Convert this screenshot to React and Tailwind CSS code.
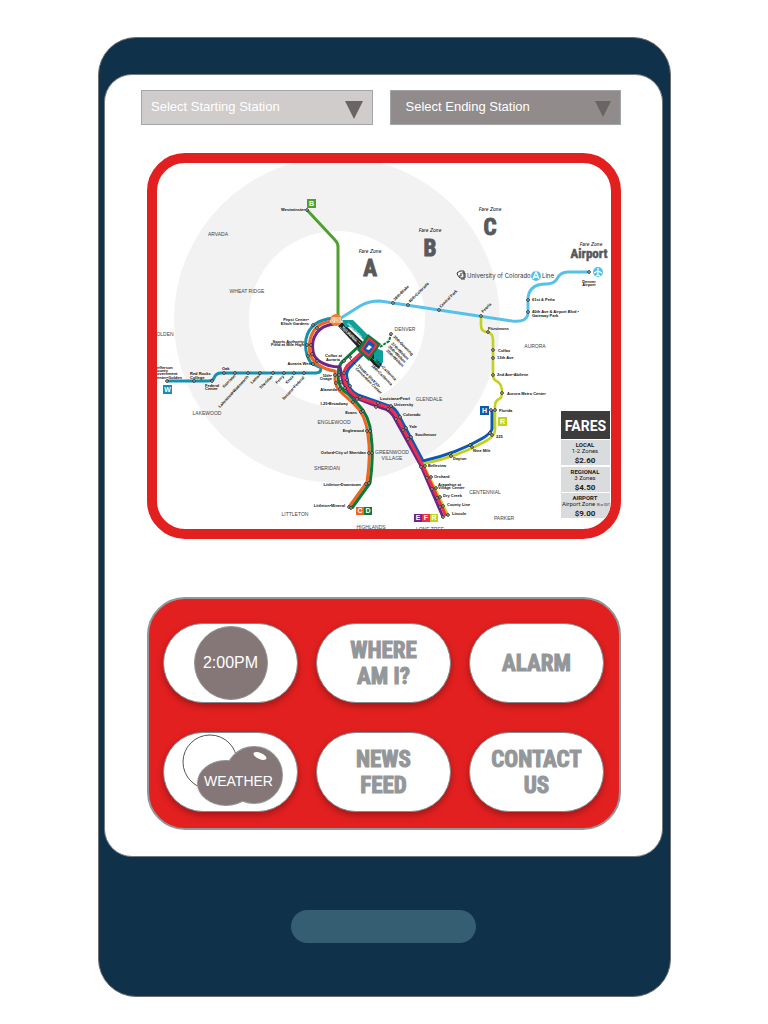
import React from "react";

const stops = [
  [307, 210], [393, 303], [408, 305], [439, 310], [481, 316], [528, 312], [528, 300], [589, 272],
  [488, 332], [493, 350], [493, 358], [493, 375], [502, 393], [495, 410], [491, 410], [490, 433], [492, 435],
  [470, 445], [472, 447], [450, 454], [451, 456],
  [167, 381], [194, 381], [212, 381], [224, 373], [235, 373], [248, 373], [260, 373], [273, 373], [284, 373], [294, 373], [304, 373],
  [313, 325], [317, 328], [307, 345], [311, 345], [308, 356], [312, 354], [313, 364], [317, 361],
  [391, 334], [344, 361], [350, 357], [335, 375], [339, 375], [344, 373], [336, 383], [341, 382], [347, 380],
  [340, 389], [345, 388], [350, 386], [353, 402], [357, 399], [360, 397], [376, 407], [378, 403], [388, 409], [391, 406],
  [396, 419], [400, 417], [403, 430], [406, 428], [408, 439], [411, 437],
  [361, 412], [363, 411], [367, 431], [370, 431], [369, 453], [372, 453], [366, 484], [369, 483], [349, 507], [351, 508],
  [421, 467], [425, 466], [427, 478], [431, 477], [432, 489], [436, 488], [437, 498], [440, 497],
  [440, 507], [443, 506], [443, 517], [448, 515],
];

const stations = [
  [305, 211, "Westminster", "end"],
  [532, 301, "61st & Peña"], [532, 313, "40th Ave & Airport Blvd •"], [532, 317, "Gateway Park"],
  [589, 283, "Denver", "middle"], [589, 286, "Airport", "middle"],
  [488, 330, "Fitzsimons"], [498, 352, "Colfax"], [497, 359, "13th Ave"], [497, 376, "2nd Ave•Abilene"],
  [507, 395, "Aurora Metro Center"], [499, 412, "Florida"], [496, 438, "225"], [473, 452, "Nine Mile"], [453, 460, "Dayton"],
  [157, 369, "efferson"], [157, 372, "ounty"], [157, 375, "overnment"], [157, 379, "enter•Golden"],
  [190, 375, "Red Rocks"], [190, 379, "College"], [205, 387, "Federal"], [205, 390, "Center", "start"], [222, 370, "Oak"],
  [309, 321, "Pepsi Center•", "end"], [309, 325, "Elitch Gardens", "end"],
  [304, 343, "Sports Authority", "end"], [304, 346, "Field at Mile High", "end"],
  [312, 365, "Auraria West", "end"], [342, 357, "Colfax at", "end"], [340, 361, "Auraria", "end"],
  [332, 377, "10th•", "end"], [332, 380, "Osage", "end"], [337, 391, "Alameda", "end"],
  [348, 405, "I-25•Broadway", "end"], [357, 414, "Evans", "end"], [364, 432, "Englewood", "end"],
  [366, 454, "Oxford•City of Sheridan", "end"], [361, 486, "Littleton•Downtown", "end"], [345, 507, "Littleton•Mineral", "end"],
  [380, 400, "Louisiana•Pearl"], [394, 406, "University"], [403, 416, "Colorado"], [409, 428, "Yale"], [415, 436, "Southmoor"],
  [428, 467, "Belleview"], [434, 478, "Orchard"], [438, 486, "Arapahoe at"], [438, 489, "Village Center"],
  [443, 497, "Dry Creek"], [447, 506, "County Line"], [452, 515, "Lincoln"],
];

const slanted = [
  [395, 301, -45, "38th•Blake"], [410, 303, -45, "40th•Colorado"], [441, 308, -45, "Central Park"], [483, 313, -45, "Peoria"],
  [224, 388, -45, "Garrison"], [220, 408, -47, "Lakewood•Wadsworth"], [252, 384, -45, "Lamar"], [261, 389, -45, "Sheridan"],
  [277, 384, -45, "Perry"], [287, 384, -45, "Knox"], [284, 400, -47, "Decatur•Federal"],
  [393, 337, 45, "30th•Downing"], [391, 344, 45, "27th•Welton"], [388, 347, 45, "25th•Welton"], [386, 351, 45, "20th•Welton"],
  [375, 361, 45, "16th•California"], [371, 366, 45, "18th•California"],
  [357, 366, 45, "Theatre District•"], [355, 369, 45, "Convention Center"],
];

const cities = [
  [218, 236, "ARVADA"], [247, 293, "WHEAT RIDGE"], [165, 336, "OLDEN"], [207, 415, "LAKEWOOD"], [405, 331, "DENVER"],
  [535, 348, "AURORA"], [429, 401, "GLENDALE"], [334, 424, "ENGLEWOOD"], [327, 470, "SHERIDAN"], [392, 454, "GREENWOOD"],
  [392, 460, "VILLAGE"], [485, 494, "CENTENNIAL"], [504, 520, "PARKER"], [295, 516, "LITTLETON"], [371, 529, "HIGHLANDS"], [430, 531, "LONE TREE"],
];

const zones = [[370, 253, 276, "A"], [430, 232, 256, "B"], [490, 211, 235, "C"]];

const badges = [
  [307, 199, 9, "#4fa02e", "B"], [163, 385, 9, "#1590ad", "W"], [480, 406, 9, "#1259a8", "H"], [498, 417, 9, "#c1d21d", "R"],
  [356, 507, 8, "#f0641e", "C"], [364, 507, 8, "#0c7a3a", "D"],
  [414, 514, 8, "#6f2586", "E"], [422, 514, 8, "#ee2f48", "F"], [430, 514, 8, "#c1d21d", "R"],
];

const fares = [
  [440, "LOCAL", "1-2 Zones", "$2.60"],
  [467, "REGIONAL", "3 Zones", "$4.50"],
  [493, "AIRPORT", "Airport Zone", "$9.00"],
];

function Line({ d, color, w = 2 }) {
  return <path d={d} fill="none" stroke={color} strokeWidth={w} strokeLinejoin="round" />;
}

function TransitMap() {
  return (
    <svg viewBox="157 163 454 366" className="block w-full font-['Liberation_Sans',sans-serif]" role="img" aria-label="Rail map">
      <circle cx="337" cy="320" r="163" fill="#f2f2f2" />
      <circle cx="337" cy="319" r="88" fill="#fff" />

      <g fill="#444" className="text-[5px]" textAnchor="middle">
        {cities.map(([x, y, t]) => <text key={t} x={x} y={y}>{t}</text>)}
      </g>

      <Line d="M307 210 L335 240 Q338 243 338 247 V318" color="#4fa02e" w={3} />
      <Line d="M341 318 L360 306 Q368 301 380 301 L439 310 L512 321 Q528 323 528 312 V300 Q528 284 546 284 Q554 284 557 279 Q560 272 568 272 H589" color="#55c1e8" w={3} />
      <Line d="M481 316 V325 Q481 332 487 332 Q493 333 493 340 V375 Q493 380 498 382 Q502 385 502 392 Q502 398 499 399 Q495 401 495 406 V430 Q495 436 486 441 Q460 456 423 464 L448 515" color="#c1d21d" w={2.6} />
      <Line d="M492 410 V429 Q491 433 483 438 Q458 453 423 461 L397 412 Q393 406 386 405 L358 395 Q348 390 347 378 Q345 371 352 365 L367 350" color="#0e58b5" w={3} />
      <Line d="M167 381 H208 Q213 381 214 378 Q216 373 221 373 H316 Q321 373 321 368 L311 363 Q304 353 306 339 Q310 320 334 318" color="#1590ad" w={3} />
      <Line d="M334 321 Q314 322 310 340 Q307 355 316 363 Q325 370 335 371 V379 Q335 388 344 395 L354 404 Q366 415 368 435 Q371 455 367 482 L349 507" color="#f0641e" w={3} />
      <Line d="M359 346 L343 361 Q338 365 338 376 Q338 388 348 394 L357 403 Q370 416 371 435 Q374 455 370 483 L352 508" color="#0c7a3a" w={3} />
      <Line d="M334 324 Q317 326 313 341 Q311 356 319 361 Q328 367 340 367 Q341 371 342 378 Q344 390 356 398 L382 408 Q391 410 395 419 L421 466 L443 517" color="#6f2586" w={3} />
      <Line d="M365 349 L349 364 Q343 369 344 378 Q346 390 357 397 L384 406 Q392 408 397 417 L422 464 L446 516" color="#ee2f48" w={3} />

      <path d="M338 326 L342 322 L383 361 L379 369 L374 365 Z" fill="#222" />
      <path d="M340 327 L360 345 M343 326 L363 345 M370 356 L380 366" stroke="#ddd" strokeDasharray="1 1" fill="none" />
      <path d="M342 320 H353 L370 337 L365 341 L350 327 H345 Z" fill="#10a09c" />
      <path d="M374 347 L383 351 V362 L379 366 L374 361 Z" fill="#10a09c" />
      <path d="M380 347 L389 341 L391 334" stroke="#0c7a3a" strokeWidth="2" strokeDasharray="3 1" fill="none" />
      <path d="M357 350 L368 334 L381 344 L369 361 Z" fill="#0c7a3a" />
      <path d="M360 350 L369 337 L378 345 L369 357 Z" fill="#ee2f48" />
      <path d="M363 349 L369 340 L375 345 L369 354 Z" fill="#0e58b5" />
      <path d="M366 349 L369 345 L372 347 L369 350 Z" fill="#fff" />
      <path d="M350 359 L357 366" stroke="#222" strokeWidth="1" strokeDasharray="1 1" />
      <g fill="#fff" className="text-[3px] font-bold">
        <text transform="translate(347 324) rotate(45)">Union Station</text>
        <text transform="translate(342 328) rotate(45)">Free MallRide</text>
      </g>

      <g fill="#fff" stroke="#222" strokeWidth="1">
        {stops.map(([x, y], i) => <circle key={i} cx={x} cy={y} r="1.3" />)}
      </g>

      <circle cx="336" cy="320" r="6" fill="#ee7d2e" />
      <g fill="#fff" className="text-[3px] font-bold" textAnchor="middle">
        <text x="336" y="320">UNION</text>
        <text x="336" y="323">STATION</text>
      </g>

      <g fill="#111" className="text-[4px] font-bold">
        {stations.map(([x, y, t, a]) => <text key={t} x={x} y={y} textAnchor={a || "start"}>{t}</text>)}
        {slanted.map(([x, y, r, t]) => <text key={t} transform={`translate(${x} ${y}) rotate(${r})`}>{t}</text>)}
      </g>

      {badges.map(([x, y, s, c, t]) => (
        <g key={x}>
          <rect x={x} y={y} width={s} height={s} fill={c} />
          <text x={x + s / 2} y={y + s / 2 + 2} fill="#fff" textAnchor="middle" className="text-[7px] font-bold">{t}</text>
        </g>
      ))}

      <g fill="#58595b" textAnchor="middle" className="font-['Liberation_Sans_Narrow','Roboto_Condensed','Liberation_Sans',sans-serif]">
        {zones.map(([x, y, by, t]) => (
          <g key={t}>
            <text x={x} y={y} fill="#222" className="text-[6px] italic">Fare Zone</text>
            <text x={x} y={by} stroke="#58595b" strokeWidth="1" className="text-[23px] font-bold">{t}</text>
          </g>
        ))}
        <text x="591" y="246" fill="#222" className="text-[6px] italic">Fare Zone</text>
        <text x="589" y="258" className="text-[13px] font-bold" stroke="#58595b" strokeWidth="0.5">Airport</text>
      </g>

      <g fill="none" stroke="#333" strokeWidth="1">
        <path d="M460 271 H464 V278 H460 Q457 275 457 273 Z M461 273 V276 H459" />
        <path d="M462 273 H465 V278 M461 279 H465" />
      </g>
      <g fill="#333" className="font-['Inter','Liberation_Sans',sans-serif] text-[6px]">
        <text x="467" y="278">University of Colorado</text>
        <text x="542" y="278">Line</text>
      </g>
      <circle cx="536" cy="276" r="5" fill="#55c1e8" />
      <path d="M533 279 L536 272 L539 279 M534 277 H538" fill="none" stroke="#fff" strokeWidth="1.3" />
      <circle cx="598" cy="272" r="5" fill="#55c1e8" />
      <path d="M598 268 V276 M594 273 L598 271 L602 273 M596 276 L598 275 L600 276" fill="none" stroke="#fff" strokeWidth="1.2" />

      <rect x="561" y="411" width="49" height="28" fill="#3c3c3d" />
      <text x="585.5" y="431" fill="#fff" textAnchor="middle" className="font-['Roboto',sans-serif] text-[14px] font-bold">FARES</text>
      {fares.map(([y, name, scope, price]) => (
        <g key={name} fill="#222" textAnchor="middle" className="font-['Roboto',sans-serif]">
          <rect x="561" y={y} width="49" height="25" fill="#dadbdc" />
          <text x="585" y={y + 7} className="text-[6px] font-bold">{name}</text>
          {name === "AIRPORT" ? (
            <text x="562" y={y + 13} textAnchor="start" className="text-[6px]">
              {scope} <tspan className="text-[3px]">IN or OUT</tspan>
            </text>
          ) : (
            <text x="585" y={y + 13} className="text-[6px]">{scope}</text>
          )}
          <text x="585" y={y + 23} className="text-[8px] font-bold">{price}</text>
        </g>
      ))}
    </svg>
  );
}

function StationSelect({ label, className, arrow }) {
  return (
    <div className="relative flex-1">
      <select aria-label={label} className={`block h-[35px] w-full appearance-none rounded-none border border-[#a3a6a8] pb-[2px] text-[13px] leading-5 text-white ${className}`}>
        <option>{label}</option>
      </select>
      <svg viewBox="0 0 18 18" className={`pointer-events-none absolute top-[11px] right-[10px] fill-[#6b6464] ${arrow}`}>
        <path d="M0 0 H18 L9 18 Z" />
      </svg>
    </div>
  );
}

function Pill({ children }) {
  return (
    <button type="button" className="flex h-20 items-center justify-center rounded-full border border-[#85898b] bg-white pt-[2px] font-['Liberation_Sans_Narrow','Roboto_Condensed','Liberation_Sans',sans-serif] text-[23px] leading-[26px] font-bold text-[#939799] shadow-[0_3px_7px_rgba(0,0,0,0.3)] [-webkit-text-stroke:1px_#939799]">
      <span>{children}</span>
    </button>
  );
}

const plainPill = "flex h-20 items-center justify-center rounded-full border border-[#85898b] bg-white text-white shadow-[0_3px_7px_rgba(0,0,0,0.3)]";

export default function App() {
  return (
    <main className="min-h-screen bg-white pt-[37px] pr-[97px] pb-[27px] pl-[98px] font-['Liberation_Sans',Arial,sans-serif]">
      <div className="rounded-[38px] border border-[#6f6f72] bg-[#10314a] pt-9 pr-[7px] pb-[53px] pl-[5px]">
        <div className="rounded-[28px] border border-[#77797c] bg-white pt-[15px] pr-[41px] pb-[26px] pl-9">
          <div className="flex gap-[17px]">
            <StationSelect label="Select Starting Station" className="bg-[#d0cccc] pl-[9px]" arrow="size-[18px]" />
            <StationSelect label="Select Ending Station" className="bg-[#928b8b] pl-[15px]" arrow="size-4" />
          </div>

          <section className="mt-7 ml-[6px] overflow-hidden rounded-[38px] border-10 border-[#e32020]">
            <TransitMap />
          </section>

          <section className="mt-[58px] ml-[6px] grid grid-cols-3 gap-x-[18px] gap-y-[29px] rounded-[38px] border-2 border-[#929698] bg-[#e32020] pt-6 pr-[15px] pb-4 pl-[14px]">
            <button type="button" className={plainPill}>
              <span className="flex size-[74px] items-center justify-center rounded-full border border-[#929698] bg-[#857777] text-[16px]">2:00PM</span>
            </button>
            <Pill>WHERE<br />AM I?</Pill>
            <Pill>ALARM</Pill>
            <button type="button" className={plainPill}>
              <span className="relative grid h-full w-full place-items-center">
                <svg viewBox="0 0 133 78" className="col-start-1 row-start-1 w-full">
                  <circle cx="46" cy="29" r="27" fill="#fff" stroke="#555" />
                  <g stroke="#929698" strokeWidth="2">
                    <circle cx="90" cy="42" r="28" />
                    <ellipse cx="62" cy="50" rx="28" ry="22" />
                  </g>
                  <g fill="#857777">
                    <circle cx="90" cy="42" r="28" />
                    <ellipse cx="62" cy="50" rx="28" ry="22" />
                  </g>
                  <ellipse cx="96" cy="23" rx="7" ry="3" fill="#fff" transform="rotate(24 96 23)" />
                </svg>
                <span className="z-10 col-start-1 row-start-1 mt-[18px] ml-4 text-[14px] leading-4">WEATHER</span>
              </span>
            </button>
            <Pill>NEWS<br />FEED</Pill>
            <Pill>CONTACT<br />US</Pill>
          </section>
        </div>
        <button type="button" aria-label="Home" className="mx-auto mt-[53px] block h-[33px] w-[185px] rounded-full bg-[#365e73]" />
      </div>
    </main>
  );
}
